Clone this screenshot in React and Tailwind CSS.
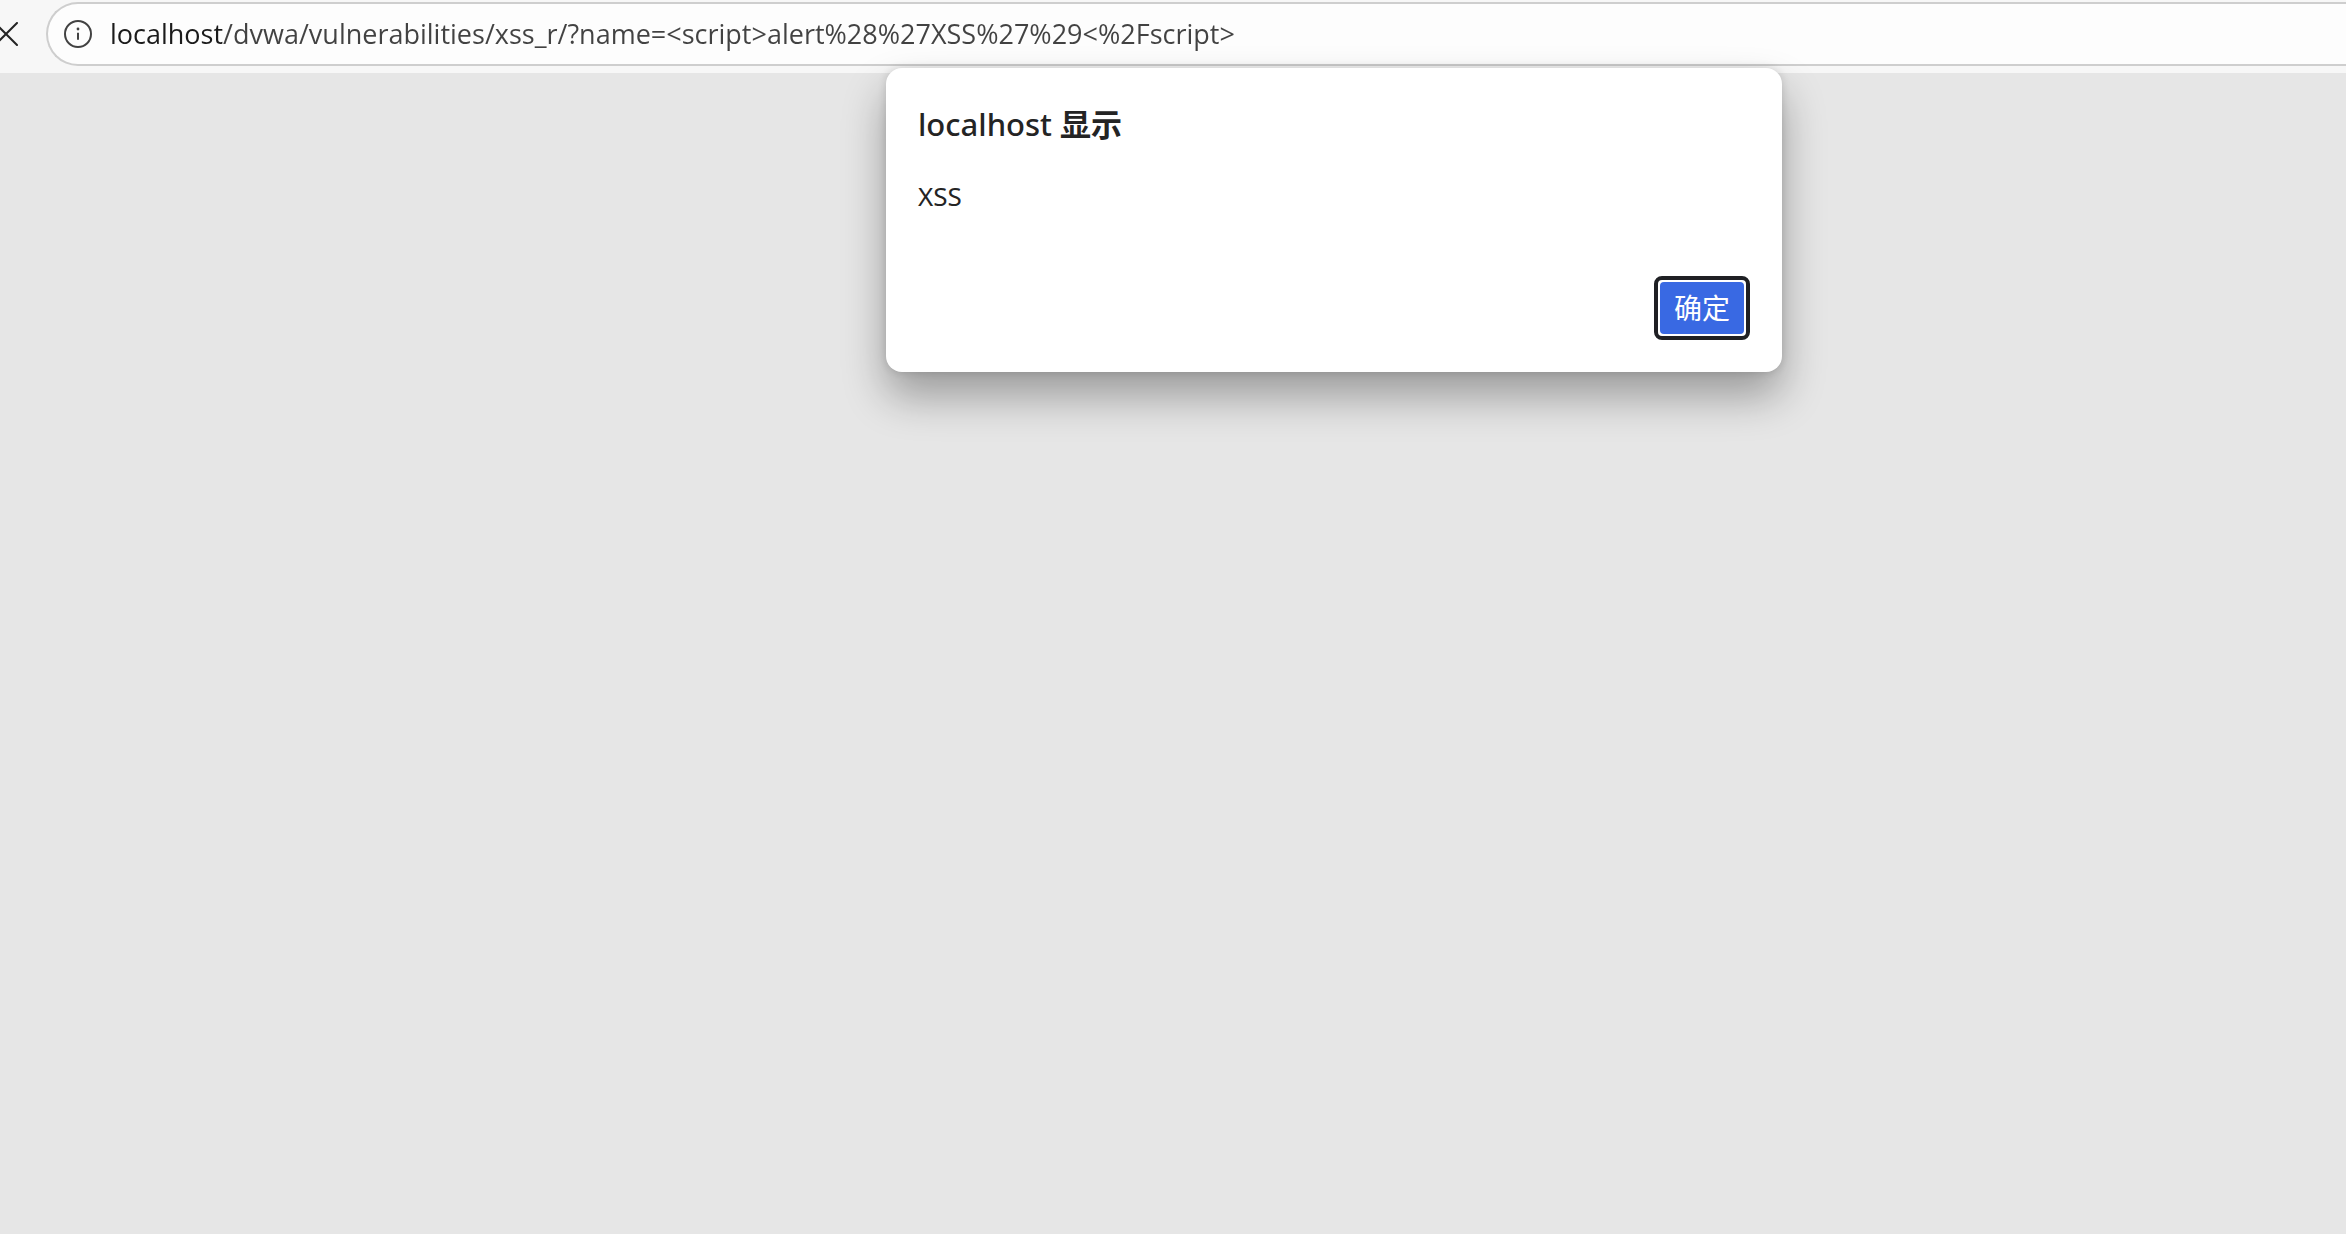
import React from "react";

function StopIcon() {
  return (
    <svg className="h-6 w-6" viewBox="0 0 24 24" fill="none" stroke="#242424" strokeWidth="2" strokeLinecap="round" aria-hidden="true">
      <path d="M1 1l22 22M23 1L1 23" />
    </svg>
  );
}

function InfoIcon() {
  return (
    <svg className="h-7 w-7" viewBox="0 0 28 28" fill="none" aria-hidden="true">
      <circle cx="14" cy="14" r="13" stroke="#424242" strokeWidth="2" />
      <circle cx="14" cy="9" r="1.4" fill="#424242" />
      <path d="M14 12.8v7" stroke="#424242" strokeWidth="2" strokeLinecap="butt" />
    </svg>
  );
}

function AddressBar() {
  return (
    <header className="flex h-[73px] items-start overflow-hidden bg-[#f7f7f7] pt-0.5">
      <button type="button" aria-label="Stop loading" className="-ml-1.5 mr-7 flex h-16 shrink-0 items-center">
        <StopIcon />
      </button>
      <div className="flex h-16 min-w-0 flex-1 items-center rounded-l-full border-2 border-r-0 border-[#cecece] bg-[#fdfdfd] pl-4">
        <button type="button" aria-label="Site information" className="mr-[18px] shrink-0">
          <InfoIcon />
        </button>
        <input
          type="text"
          aria-label="Address"
          spellCheck={false}
          defaultValue="localhost/dvwa/vulnerabilities/xss_r/?name=<script>alert%28%27XSS%27%29<%2Fscript>"
          className="h-10 min-w-0 flex-1 bg-[linear-gradient(to_right,#1b1b1b_112px,#424242_112px)] bg-clip-text font-['Open_Sans',sans-serif] text-[27px] text-transparent outline-none"
        />
      </div>
    </header>
  );
}

function AlertDialog() {
  return (
    <div
      role="alertdialog"
      aria-labelledby="alert-title"
      aria-describedby="alert-message"
      className="w-[896px] rounded-2xl bg-white px-8 pt-[30px] pb-8 font-['Noto_Sans','Noto_Sans_CJK_SC',sans-serif] text-[#242424] shadow-[0_0_8px_rgba(0,0,0,0.14),0_24px_44px_rgba(0,0,0,0.33)]"
    >
      <h1 id="alert-title" className="text-[31px] leading-[52px] font-medium">
        localhost <span className="font-bold">显示</span>
      </h1>
      <p id="alert-message" className="mt-7 text-[26px] leading-[36px]">
        XSS
      </p>
      <div className="mt-[62px] flex justify-end">
        <button type="button" className="rounded-lg border-4 border-[#1f2024] bg-white p-0.5">
          <span className="flex h-[52px] w-[84px] items-center justify-center rounded-sm bg-[#3969e3] text-[28px] text-white">确定</span>
        </button>
      </div>
    </div>
  );
}

export default function App() {
  return (
    <div className="flex min-h-screen flex-col bg-[#e6e6e6]">
      <AddressBar />
      <main className="flex-1" />
      <div className="absolute inset-x-0 top-[68px] flex justify-center pl-[322px]">
        <AlertDialog />
      </div>
    </div>
  );
}
